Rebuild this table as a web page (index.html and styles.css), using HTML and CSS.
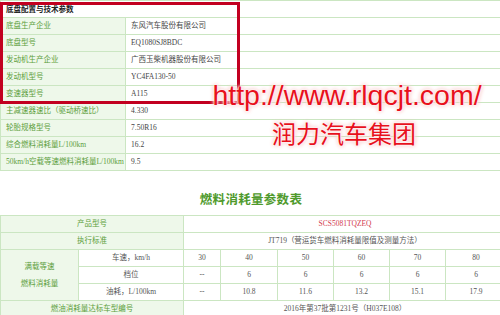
FILE: index.html
```html
<!DOCTYPE html>
<html lang="zh">
<head>
<meta charset="utf-8">
<title>底盘配置与技术参数</title>
<link rel="stylesheet" href="styles.css">
</head>
<body>
<div class="page">
  <table class="spec">
    <colgroup><col class="c-label"><col class="c-value"></colgroup>
    <tr class="head"><td colspan="2">底盘配置与技术参数</td></tr>
    <tr><td class="lbl">底盘生产企业</td><td class="val">东风汽车股份有限公司</td></tr>
    <tr><td class="lbl">底盘型号</td><td class="val">EQ1080SJ8BDC</td></tr>
    <tr><td class="lbl">发动机生产企业</td><td class="val">广西玉柴机器股份有限公司</td></tr>
    <tr><td class="lbl">发动机型号</td><td class="val">YC4FA130-50</td></tr>
    <tr><td class="lbl">变速器型号</td><td class="val">A115</td></tr>
    <tr><td class="lbl">主减速器速比（驱动桥速比）</td><td class="val">4.330</td></tr>
    <tr><td class="lbl">轮胎规格型号</td><td class="val">7.50R16</td></tr>
    <tr><td class="lbl">综合燃料消耗量L/100km</td><td class="val">16.2</td></tr>
    <tr><td class="lbl">50km/h空载等速燃料消耗量L/100km</td><td class="val">9.5</td></tr>
  </table>

  <h2 class="title">燃料消耗量参数表</h2>

  <table class="fuel">
    <colgroup>
      <col class="f1"><col class="f2"><col class="f3"><col class="f4"><col class="f4"><col class="f4"><col class="f4"><col class="f5">
    </colgroup>
    <tr><td colspan="2" class="lbl">产品型号</td><td colspan="6" class="red">SCS5081TQZEQ</td></tr>
    <tr><td colspan="2" class="lbl">执行标准</td><td colspan="6">JT719（营运货车燃料消耗量限值及测量方法）</td></tr>
    <tr><td rowspan="3" class="lbl multi">满载等速<br>燃料消耗量</td><td>车速，km/h</td><td>30</td><td>40</td><td>50</td><td>60</td><td>70</td><td>80</td></tr>
    <tr><td>档位</td><td>--</td><td>6</td><td>6</td><td>6</td><td>6</td><td>6</td></tr>
    <tr><td>油耗，L/100km</td><td>--</td><td>10.8</td><td>11.6</td><td>13.2</td><td>15.1</td><td>17.9</td></tr>
    <tr><td colspan="2" class="lbl">燃油消耗量达标车型编号</td><td colspan="6">2016年第37批第1231号（H037E108）</td></tr>
  </table>

  <div class="redbox"></div>
  <div class="mark">
    <div class="url">http://www.rlqcjt.com/</div>
    <div class="brand">润力汽车集团</div>
  </div>
</div>
</body>
</html>
```

FILE: styles.css
```css
html, body {
  margin: 0;
  padding: 0;
  background: #fff;
  overflow: hidden;
}
.page {
  position: relative;
  width: 506px;
  height: 315px;
  overflow: hidden;
  font-family: "Liberation Serif", "Noto Sans CJK SC", serif;
  font-size: 7.5px;
  color: #4a4a4a;
}
table {
  border-collapse: collapse;
  table-layout: fixed;
  width: 506px;
}
td {
  border: 1px solid #cbe6c2;
  padding: 0;
  height: 16px;
  line-height: 16px;
  white-space: nowrap;
  overflow: hidden;
}
.c-label { width: 125px; }
.spec .head td {
  font-family: "Noto Sans CJK SC", sans-serif;
  font-weight: bold;
  color: #222;
  padding-left: 5px;
}
.spec .lbl {
  background: #eef8ea;
  color: #5d9e3c;
  padding-left: 5px;
}
.spec .val {
  padding-left: 5px;
  color: #444;
}
.title {
  margin: 0;
  height: 44px;
  box-sizing: border-box;
  display: flex;
  align-items: flex-end;
  justify-content: center;
  padding: 0 4px 9px 0;
  line-height: 14px;
  font-family: "Noto Sans CJK SC", sans-serif;
  font-size: 12.5px;
  font-weight: bold;
  color: #4f9a2c;
  letter-spacing: 0.3px;
}
.fuel td {
  text-align: center;
  color: #555;
}
.fuel .lbl {
  background: #eef8ea;
  color: #5d9e3c;
}
.fuel .multi {
  line-height: 17px;
}
.fuel .red {
  color: #d23a4e;
}
.f1 { width: 78px; }
.f2 { width: 105px; }
.f3 { width: 37px; }
.f4 { width: 56px; }
.f5 { width: 61px; }
.fuel col:nth-child(4) { width: 57px; }

.redbox {
  position: absolute;
  left: 0;
  top: 2px;
  width: 234px;
  height: 96px;
  border: 3px solid #c20020;
}
.mark {
  position: absolute;
  left: 210px;
  top: 78px;
  width: 274px;
  color: #e8101c;
  font-family: "Liberation Sans", "Noto Sans CJK SC", sans-serif;
  text-shadow: 0 0 2px #fff, 0 0 3px #fff, 0 0 4px #f7b5b5, 0 0 5px #f9c8c8;
}
.url {
  font-size: 28.5px;
  line-height: 34px;
  white-space: nowrap;
  text-align: center;
}
.brand {
  font-family: "Noto Sans CJK SC", sans-serif;
  font-size: 24px;
  line-height: 30px;
  margin: 6px 0 0 62px;
}
```
